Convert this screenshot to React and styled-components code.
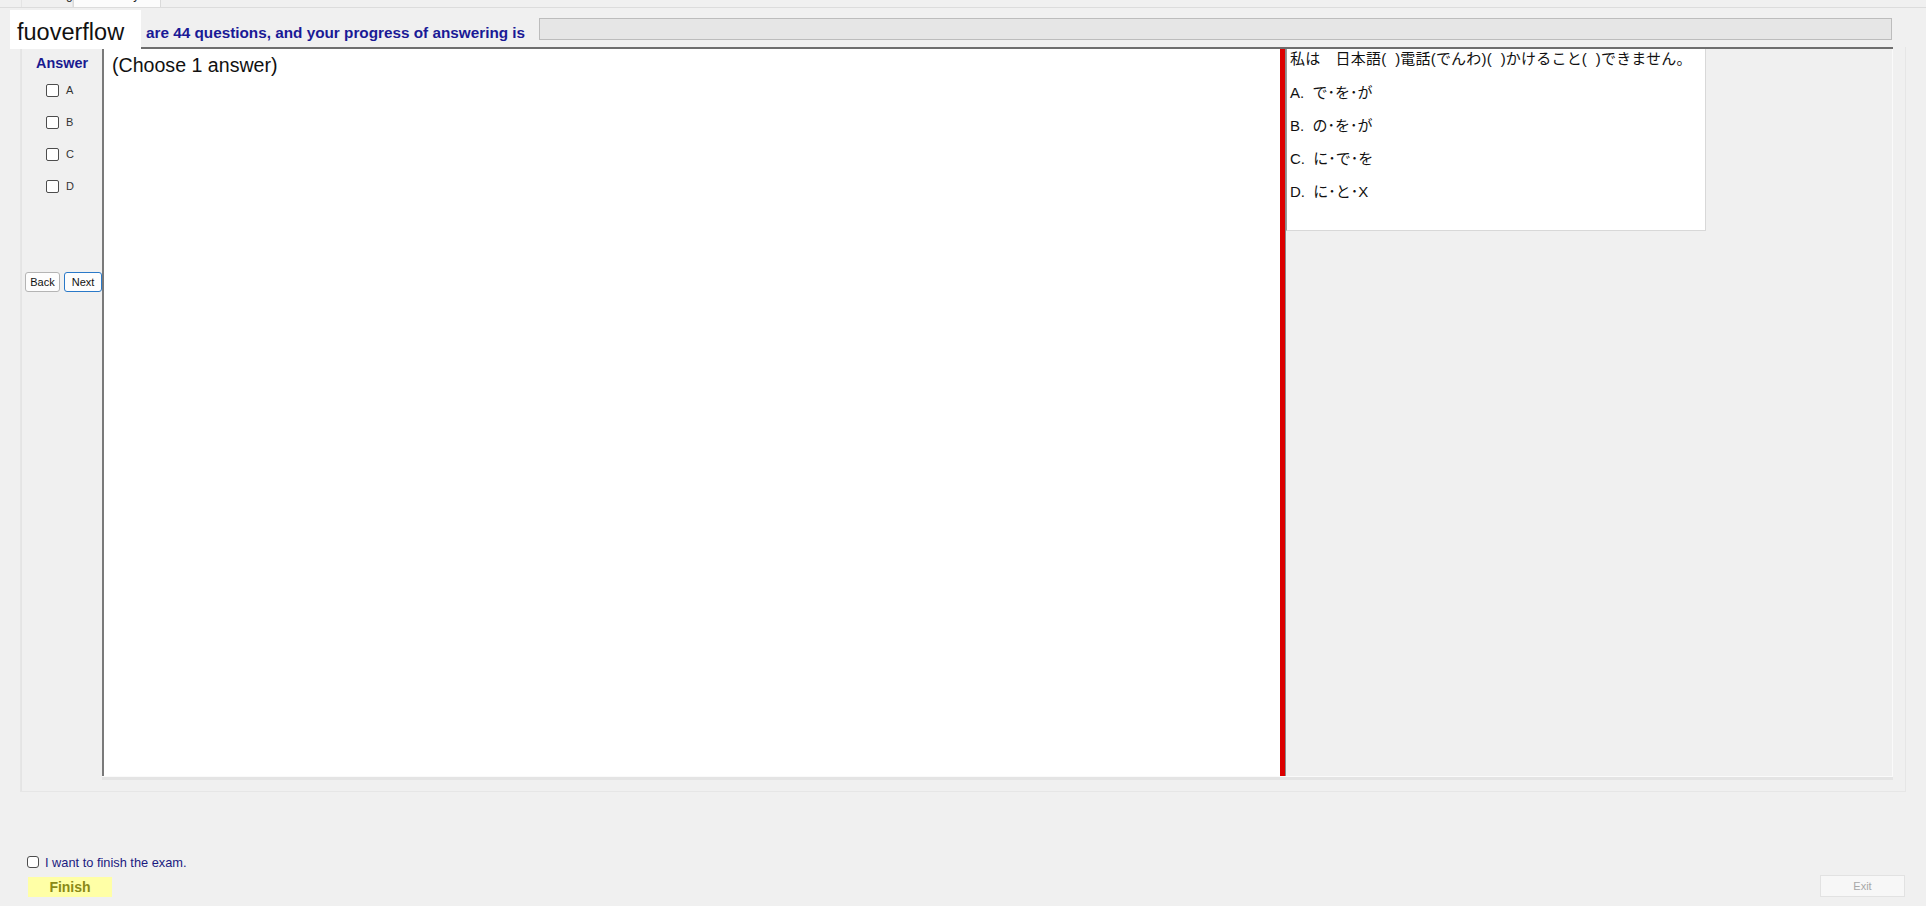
import React from 'react';
import styled, { createGlobalStyle } from 'styled-components';

const Global = createGlobalStyle`
  html, body {
    margin: 0;
    padding: 0;
    background: #f0f0f0;
    font-family: "Liberation Sans", Arial, sans-serif;
  }
`;

const Page = styled.div`
  position: relative;
  width: 1926px;
  height: 906px;
  overflow: hidden;
  background: #f0f0f0;
`;

const TabStrip = styled.div`
  display: flex;
  align-items: flex-end;
  height: 7px;
  padding-left: 21px;
  overflow: hidden;
  border-bottom: 1px solid #dcdcdc;
`;

const Tab = styled.div`
  flex-shrink: 0;
  height: 20px;
  width: ${p => p.$w}px;
  box-sizing: border-box;
  padding-left: 6px;
  font-size: 12px;
  line-height: 14px;
  color: #222;
  background: ${p => (p.$active ? '#fcfcfc' : '#f0f0f0')};
  border: 1px solid ${p => (p.$active ? '#dadada' : '#e4e4e4')};
  border-bottom: none;
`;

const Logo = styled.div`
  position: absolute;
  left: 10px;
  top: 10px;
  width: 131px;
  height: 39px;
  box-sizing: border-box;
  padding-left: 7px;
  background: #fff;
  font-size: 23.5px;
  line-height: 44px;
  color: #111;
  z-index: 5;
`;

const HeaderRow = styled.div`
  display: flex;
  align-items: flex-start;
  height: 39px;
  box-sizing: border-box;
  padding: 10px 34px 0 146px;
`;

const HeaderText = styled.div`
  margin-top: 6px;
  font-size: 15.3px;
  font-weight: bold;
  line-height: 18px;
  color: #1a1a96;
  white-space: nowrap;
`;

const Progress = styled.div`
  flex: 1;
  height: 22px;
  margin-left: 14px;
  box-sizing: border-box;
  background: #e6e6e6;
  border: 1px solid #bcbcbc;
`;

const MainPanel = styled.div`
  display: flex;
  margin: 0 20px;
  height: 745px;
  box-sizing: border-box;
  border: 1px solid #e6e6e6;
  border-top: none;
  background: #f0f0f0;
`;

const AnswerCol = styled.div`
  width: 80px;
  flex-shrink: 0;
  display: flex;
  flex-direction: column;
  border-left: 1px solid #e4e4e4;
`;

const AnswerTitle = styled.div`
  margin-top: 7px;
  text-align: center;
  font-size: 14.4px;
  font-weight: bold;
  line-height: 18px;
  color: #1a1a90;
`;

const ChoiceRow = styled.label`
  display: flex;
  align-items: center;
  height: 32px;
  padding-left: 24px;
  font-size: 11px;
  color: #333;
  &:first-of-type {
    margin-top: 2px;
  }
`;

const Box = styled.span`
  width: 11px;
  height: 11px;
  margin-right: 7px;
  border: 1px solid #4d4d4d;
  border-radius: 2px;
  background: #fff;
`;

const NavRow = styled.div`
  display: flex;
  gap: 4px;
  margin-top: 70px;
  padding-left: 3px;
`;

const NavButton = styled.button`
  height: 20px;
  padding: 0;
  width: ${p => p.$w}px;
  font-family: "Liberation Sans", Arial, sans-serif;
  font-size: 11px;
  color: #111;
  background: #fdfdfd;
  border: 1px solid ${p => (p.$focus ? '#2a79c8' : '#b4b4b4')};
  border-radius: 3px;
`;

const ContentArea = styled.div`
  flex: 1;
  display: flex;
  height: 730px;
  margin-right: 12px;
  box-sizing: border-box;
  border-top: 2px solid #6e6e6e;
  border-bottom: 1px solid #fafafa;
  box-shadow: 0 3px 0 #e4e4e4;
`;

const QuestionPane = styled.div`
  width: 1178px;
  flex-shrink: 0;
  box-sizing: border-box;
  padding: 4px 0 0 8px;
  background: #fff;
  border-left: 2px solid #7a7a7a;
  font-size: 19.6px;
  line-height: 24px;
  color: #111;
`;

const Splitter = styled.div`
  width: 6px;
  flex-shrink: 0;
  background: #dc0000;
  border-right: 1px solid #8a8a8a;
  box-sizing: border-box;
`;

const RightPane = styled.div`
  flex: 1;
  display: flex;
  align-items: flex-start;
  background: #f0f0f0;
  border-right: 1px solid #fafafa;
`;

const QuizBox = styled.div`
  width: 420px;
  height: 182px;
  box-sizing: border-box;
  padding: 0 0 0 3px;
  background: #fff;
  border-left: 1px solid #9a9a9a;
  border-right: 1px solid #d8d8d8;
  border-bottom: 1px solid #d8d8d8;
  font-family: "Liberation Sans", "Noto Sans CJK JP", sans-serif;
  color: #111;
`;

const QuizQuestion = styled.div`
  margin-bottom: 7px;
  font-size: 15px;
  line-height: 20px;
  letter-spacing: 0.2px;
  white-space: pre;
`;

const QuizOption = styled.div`
  font-size: 15px;
  line-height: 33px;
  white-space: pre;
`;

const Footer = styled.div`
  display: flex;
  justify-content: space-between;
  align-items: flex-end;
  margin-top: 62px;
  padding: 0 21px 0 27px;
`;

const FinishBlock = styled.div`
  display: flex;
  flex-direction: column;
`;

const FinishCheck = styled.label`
  display: flex;
  align-items: center;
  height: 16px;
  font-size: 12.8px;
  color: #1a1a80;
`;

const RoundBox = styled(Box)`
  width: 10px;
  height: 10px;
  margin-right: 6px;
  border-radius: 3px;
`;

const FinishButton = styled.div`
  width: 84px;
  height: 20px;
  margin: 7px 0 0 1px;
  background: #ffffa6;
  text-align: center;
  font-size: 14px;
  font-weight: bold;
  line-height: 20px;
  color: #8a8a16;
`;

const ExitButton = styled.div`
  width: 85px;
  height: 22px;
  box-sizing: border-box;
  background: #f7f7f7;
  border: 1px solid #e2e2e2;
  text-align: center;
  font-size: 11px;
  line-height: 20px;
  color: #a8a8a8;
`;

const choices = ['A', 'B', 'C', 'D'];

const options = [
  'A.  で･を･が',
  'B.  の･を･が',
  'C.  に･で･を',
  'D.  に･と･X',
];

const App = () => (
  <Page>
    <Global />
    <TabStrip>
      <Tab $w={52}>Reading</Tab>
      <Tab $w={88} $active>Vocabulary</Tab>
    </TabStrip>
    <Logo>fuoverflow</Logo>
    <HeaderRow>
      <HeaderText>are 44 questions, and your progress of answering is</HeaderText>
      <Progress />
    </HeaderRow>
    <MainPanel>
      <AnswerCol>
        <AnswerTitle>Answer</AnswerTitle>
        {choices.map(c => (
          <ChoiceRow key={c}>
            <Box />
            {c}
          </ChoiceRow>
        ))}
        <NavRow>
          <NavButton $w={35}>Back</NavButton>
          <NavButton $w={38} $focus>Next</NavButton>
        </NavRow>
      </AnswerCol>
      <ContentArea>
        <QuestionPane>(Choose 1 answer)</QuestionPane>
        <Splitter />
        <RightPane>
          <QuizBox>
            <QuizQuestion>私は　日本語(  )電話(でんわ)(  )かけること(  )できません。</QuizQuestion>
            {options.map(o => (
              <QuizOption key={o}>{o}</QuizOption>
            ))}
          </QuizBox>
        </RightPane>
      </ContentArea>
    </MainPanel>
    <Footer>
      <FinishBlock>
        <FinishCheck>
          <RoundBox />
          I want to finish the exam.
        </FinishCheck>
        <FinishButton>Finish</FinishButton>
      </FinishBlock>
      <ExitButton>Exit</ExitButton>
    </Footer>
  </Page>
);

export default App;
